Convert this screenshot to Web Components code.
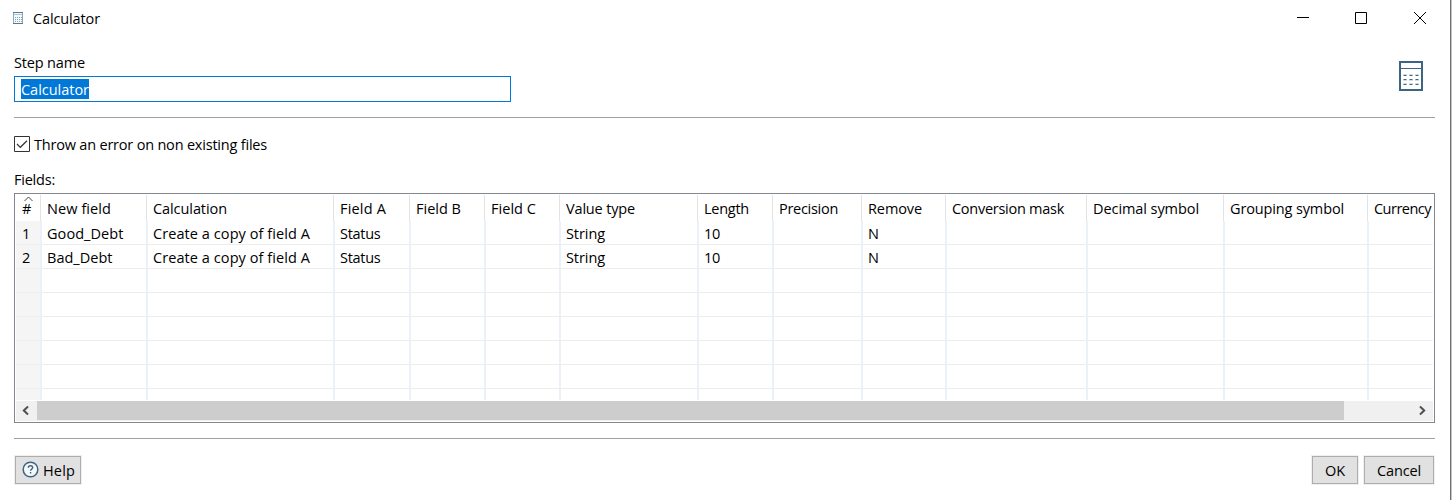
<!DOCTYPE html>
<html lang="en"><head><meta charset="utf-8"><title>Calculator</title>
<style>
html,body{margin:0;height:500px;overflow:hidden;background:#fff}
body{font:14.5px/20px "Open Sans","Noto Sans",sans-serif;color:#000}
</style></head><body>
<calc-dialog></calc-dialog>
<script>
const define=(name,html,setup)=>customElements.define(name,class extends HTMLElement{
  connectedCallback(){
    if(this.shadowRoot)return;
    const t=document.createElement('template');t.innerHTML=html;
    this.attachShadow({mode:'open'}).append(t.content.cloneNode(true));
    if(setup)setup.call(this,this.shadowRoot);
  }
});

/* Label whose tracking is adjusted to a given width */
customElements.define('fit-text',class extends HTMLElement{
  connectedCallback(){
    if(this.shadowRoot)return;
    this.attachShadow({mode:'open'}).innerHTML='<style>:host{display:inline-block;white-space:pre;flex:none}</style><span><slot></slot></span>';
    const w=+this.getAttribute('w'),n=this.textContent.length;
    if(w){const s=this.shadowRoot.querySelector('span');
      const nat=s.getBoundingClientRect().width;
      s.style.letterSpacing=((w-nat)/n)+'px';}
  }
});

define('calc-icon',`<style>:host{display:block;flex:none}svg{display:block}</style>
<svg width="26" height="32" viewBox="0 0 26 32" shape-rendering="crispEdges"><path d="M2 2h22v28H2z" fill="#fff" stroke="#3d6480" stroke-width="2"/><path d="M2 8.5h22" stroke="#3d6480"/><path d="M5 14.500h4m2 0h4m2 0h4M5 20.500h4m2 0h4m2 0h4M5 23.500h4m2 0h4m2 0h4" stroke="#d3dde4"/><path d="M5 15.500h4m2 0h4m2 0h4M5 19.500h4m2 0h4m2 0h4M5 24.500h4m2 0h4m2 0h4" stroke="#a3b6c4"/><path d="M6 15.500h2m4 0h2m4 0h2M6 19.500h2m4 0h2m4 0h2M6 24.500h2m4 0h2m4 0h2" stroke="#3d6480"/></svg>`);

define('title-bar',`<style>:host{display:flex;height:37px;align-items:center;padding-left:12px;box-sizing:border-box}
.s{display:block;margin:-1px 9px 0 0;flex:none}.t{flex:1}.w{display:block;flex:none}</style>
<svg class="s" width="12" height="14" viewBox="0 0 12 14"><path d="M1.500 1.500h9v11h-9z" fill="#f4f9fc" stroke="#8fa9bb"/><path d="M1 1.500h10M1 12.500h10" stroke="#557a94"/><path d="M2 3.500h8" stroke="#b4c5d1"/><path d="M3 6.500h7M3 8.500h7M3 10.500h7" stroke="#89a2b4" stroke-dasharray="1 1"/></svg>
<span class="t"><slot></slot></span>
<svg class="w" width="155" height="37" viewBox="1297 0 155 37" fill="none" stroke="#000"><path d="M1297 17.5h12M1355.5 12.5h11v11h-11z"/><path d="M1414 12l12 12M1426 12l-12 12"/></svg>`);

define('step-field',`<style>:host{display:block;width:497px}label{display:block;height:20px;margin-bottom:3px}
.i{display:flex;align-items:center;height:26px;box-sizing:border-box;border:1px solid #0078d7;padding-left:6px}
.sel{background:#0078d7;color:#fff;height:20px;width:68px;display:block;line-height:22px}</style>
<label><fit-text w="71">Step name</fit-text></label><div class="i"><span class="sel"><slot></slot></span></div>`);

define('check-box',`<style>:host{display:flex;align-items:center;gap:4px;height:20px}svg{display:block;margin-top:-2px}</style>
<svg width="16" height="16"><path d="M.5.5h15v15H.5z" fill="#fff" stroke="#333"/><path d="M3 8l3.300 3.300L13 4.700" fill="none" stroke="#333" stroke-width="1.200"/></svg><slot></slot>`);

define('field-grid',`<style>
:host{display:block;box-sizing:border-box;height:230px;border:1px solid #828790;padding:1px 1px 0}
.r{display:grid;grid-template-columns:26px 106px 187px 76px 75px 75px 138px 75px 89px 84px 141px 137px 144px 1fr;height:24px;overflow:hidden}
.c{box-sizing:border-box;padding-left:5px;border-right:2px solid #ebf1f9;border-bottom:1px solid #ededed;line-height:26px;overflow:hidden;background:#fff}
.c:first-child{background:#f5f5f5}.c:last-child{border-right:0}
.h{height:26px}.h .c{background:#fff;border-bottom:0;border-right:1px solid #e3e3e3;margin-right:1px;line-height:27px;position:relative}
.h .c:last-child{border:0;margin:0}
.r .c:first-child{padding-left:6px}
.h svg{position:absolute;left:8px;top:1px}
.b{height:179px;margin-bottom:1px;overflow:hidden}
</style><div class="r h"></div><div class="b"></div><scroll-bar></scroll-bar>`,function(root){
  const heads=[['#',9],['New field',64],['Calculation',74],['Field A',46],['Field B',45],['Field C',45],['Value type',69],['Length',45],['Precision',59],['Remove',54],['Conversion mask',112],['Decimal symbol',106],['Grouping symbol',114],['Currency',57]];
  const row=n=>[[n,8],[n=='1'?'Good_Debt':'Bad_Debt',n=='1'?76.5:65.5],['Create a copy of field A',157],['Status',40.5],,,['String',39],['10',16],,['N',11],,,,,];
  const fill=(el,cells)=>{for(let i=0;i<14;i++){const c=document.createElement('div');c.className='c';
    if(cells[i]){c.innerHTML='<fit-text w="'+cells[i][1]+'">'+cells[i][0]+'</fit-text>'}el.append(c)}};
  fill(root.querySelector('.h'),heads);
  root.querySelector('.h .c').insertAdjacentHTML('beforeend','<svg width="10" height="6"><path d="M.5 5L4.500 1L8.500 5" fill="none" stroke="#444"/></svg>');
  const b=root.querySelector('.b');
  for(let i=0;i<8;i++){const r=document.createElement('div');r.className='r';b.append(r);fill(r,i==0?row('1'):i==1?row('2'):[])}
});

define('scroll-bar',`<style>:host{display:flex;height:20px;background:#f0f0f0;justify-content:space-between}
.th{background:#cdcdcd;width:1307px;height:19px}svg{display:block;flex:none}.sp{flex:1}</style>
<svg width="21" height="19"><path d="M12 5.500L7.800 9.500l4.200 4" fill="none" stroke="#505050" stroke-width="2"/></svg><div class="th"></div><div class="sp"></div>
<svg width="21" height="19"><path d="M8 5.500l4.200 4-4.200 4" fill="none" stroke="#505050" stroke-width="2"/></svg>`);

define('push-button',`<style>:host{display:flex;box-sizing:border-box;height:30px;border:1px solid #f0f0f0}
button{all:unset;flex:1;display:flex;align-items:center;justify-content:center;gap:4px;box-sizing:border-box;border:1px solid #adadad;background:#e1e1e1;padding-top:1px}</style>
<button><slot name="icon"></slot><slot></slot></button>`);

define('help-icon',`<style>:host{display:block;width:17px;height:17px;margin:-2px 0 0 1px}svg{display:block}</style>
<svg width="17" height="17"><circle cx="8.500" cy="8.500" r="7.300" fill="#f4f8fb" stroke="#3d6480" stroke-width="1.500"/><path d="M6.300 6.800c0-1.500 1-2.100 2.200-2.100s2.200.7 2.200 1.900c0 1.500-2.100 1.500-2.100 3.200M8.600 11v1.600" fill="none" stroke="#3d6480" stroke-width="1.400"/></svg>`);

define('calc-dialog',`<style>
:host{display:block;width:1452px;height:500px;box-sizing:border-box;background:linear-gradient(to right,#fff 1450px,#707070 1450px,#707070 1451px,#c4c4c4 1451px)}
main{padding:0 17px 0 14px}
.top{display:flex;justify-content:space-between;padding-top:16px;height:64px}
.top calc-icon{margin:7px 11px 0 0}
hr{border:0;height:1px;margin:0;background:#a0a0a0}
check-box{margin-top:17px}.l{height:20px;margin:15px 0 3px}
.f{display:flex;height:30px;margin-top:16px}.f .g{flex:1}
field-grid{margin-bottom:15px}
</style>
<title-bar><fit-text w="67">Calculator</fit-text></title-bar>
<main><div class="top"><step-field><fit-text w="68">Calculator</fit-text></step-field><calc-icon></calc-icon></div><hr>
<check-box><fit-text w="233">Throw an error on non existing files</fit-text></check-box>
<div class="l"><fit-text w="41">Fields:</fit-text></div>
<field-grid></field-grid><hr>
<div class="f"><push-button style="width:68px"><help-icon slot="icon"></help-icon><fit-text w="32">Help</fit-text></push-button><span class="g"></span><push-button style="width:48px;margin-right:4px"><fit-text w="20">OK</fit-text></push-button><push-button style="width:72px"><fit-text w="44">Cancel</fit-text></push-button></div></main>`);
</script></body></html>
